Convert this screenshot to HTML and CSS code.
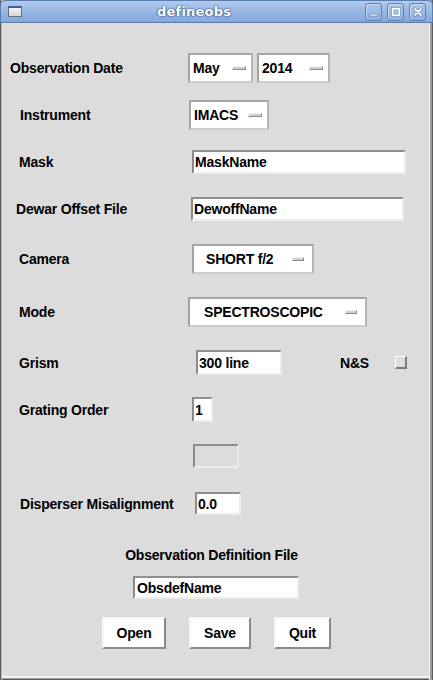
FILE: index.html
```html
<!DOCTYPE html>
<html>
<head>
<meta charset="utf-8">
<link rel="stylesheet" href="styles.css">
</head>
<body>
<div class="window">
  <div class="titlebar">
    <span class="win-icon"></span>
    <span class="title">defineobs</span>
    <div class="wm-buttons">
      <span class="wm-btn"><svg width="10" height="10" viewBox="0 0 10 10"><rect x="1" y="7" width="8" height="2" fill="#fff" stroke="#4a6a9a" stroke-width="0.6"/></svg></span>
      <span class="wm-btn"><svg width="10" height="10" viewBox="0 0 10 10"><rect x="1.5" y="1.5" width="7" height="7" fill="none" stroke="#fff" stroke-width="1.6"/><rect x="0.7" y="0.7" width="8.6" height="8.6" fill="none" stroke="#4a6a9a" stroke-width="0.4"/></svg></span>
      <span class="wm-btn"><svg width="10" height="10" viewBox="0 0 10 10"><path d="M2 2 L8 8 M8 2 L2 8" stroke="#4a6a9a" stroke-width="3" stroke-linecap="round"/><path d="M2 2 L8 8 M8 2 L2 8" stroke="#fff" stroke-width="1.8" stroke-linecap="round"/></svg></span>
    </div>
  </div>
  <div class="content">
    <div class="row r1">
      <span class="label l-date">Observation Date</span>
      <span class="menu m-month">May<i class="ind"></i></span>
      <span class="menu m-year">2014<i class="ind"></i></span>
    </div>
    <div class="row r2">
      <span class="label l-instr">Instrument</span>
      <span class="menu m-instr">IMACS<i class="ind"></i></span>
    </div>
    <div class="row r3">
      <span class="label l-mask">Mask</span>
      <span class="entry e-mask">MaskName</span>
    </div>
    <div class="row r4">
      <span class="label l-dewar">Dewar Offset File</span>
      <span class="entry e-dewar">DewoffName</span>
    </div>
    <div class="row r5">
      <span class="label l-camera">Camera</span>
      <span class="menu menu-wide m-camera">SHORT f/2<i class="ind"></i></span>
    </div>
    <div class="row r6">
      <span class="label l-mode">Mode</span>
      <span class="menu menu-wide m-mode">SPECTROSCOPIC<i class="ind"></i></span>
    </div>
    <div class="row r7">
      <span class="label l-grism">Grism</span>
      <span class="entry e-grism">300 line</span>
      <span class="label l-ns">N&amp;S</span>
      <span class="check"></span>
    </div>
    <div class="row r8">
      <span class="label l-order">Grating Order</span>
      <span class="entry e-order">1</span>
    </div>
    <div class="row r9">
      <span class="entry e-empty"></span>
    </div>
    <div class="row r10">
      <span class="label l-disp">Disperser Misalignment</span>
      <span class="entry e-disp">0.0</span>
    </div>
    <div class="row r11">
      <span class="label l-obsdef">Observation Definition File</span>
    </div>
    <div class="row r12">
      <span class="entry e-obsdef">ObsdefName</span>
    </div>
    <div class="row r13">
      <span class="button b-open">Open</span>
      <span class="button b-save">Save</span>
      <span class="button b-quit">Quit</span>
    </div>
  </div>
</div>
</body>
</html>
```

FILE: styles.css
```css
html, body {
  margin: 0;
  padding: 0;
  background: #dcdcdc;
}

.window {
  width: 433px;
  height: 680px;
  position: relative;
  background: #dcdcdc;
  font-family: "Liberation Sans", Arial, sans-serif;
  font-weight: bold;
  font-size: 14px;
  letter-spacing: -0.2px;
  color: #000;
  overflow: hidden;
  box-shadow: inset 1px 0 0 #5c5c5c, inset 2px 0 0 #bcbcbc,
              inset -1px 0 0 #5c5c5c, inset -3px 0 0 #9a9a9a, inset -4px 0 0 #f2f2f2,
              inset 0 -1px 0 #5c5c5c, inset 0 -2px 0 #9a9a9a, inset 0 -4px 0 #f2f2f2;
}

.titlebar {
  height: 23px;
  box-sizing: border-box;
  display: flex;
  align-items: center;
  background: linear-gradient(#b2cbed, #9ab9e5 45%, #84a7db);
  border: 1px solid #5b7cae;
  border-bottom-color: #5e7aa6;
  border-radius: 5px 5px 0 0;
  position: relative;
}

.win-icon {
  width: 14px;
  height: 11px;
  margin-left: 7px;
  box-sizing: border-box;
  border: 1px solid #5e6f86;
  border-top: 2px solid #3a5fa0;
  background: linear-gradient(#f2f2f2, #d6d6d6);
}

.title {
  margin-left: 135px;
  color: #fff;
  font-family: "DejaVu Sans", sans-serif;
  font-weight: bold;
  font-size: 13px;
  letter-spacing: 0.2px;
  text-shadow: 0 0 1px #2f4f82, 0 0 1px #2f4f82, 0 0 2px #3c5d90;
}

.wm-buttons {
  margin-left: auto;
  margin-right: 6px;
  display: flex;
  gap: 5px;
}

.wm-btn {
  width: 17px;
  height: 18px;
  box-sizing: border-box;
  border: 1px solid #5f7fb0;
  border-radius: 3px;
  background: linear-gradient(#adc7ec, #8fb0e0);
  box-shadow: inset 1px 1px 0 #c7daf4;
  display: flex;
  align-items: center;
  justify-content: center;
}

.wm-btn svg { display: block; }

.content {
  display: flex;
  flex-direction: column;
}

.row {
  display: flex;
  align-items: center;
  flex: none;
}

.label {
  white-space: nowrap;
  flex: none;
}

/* rows: vertical placement */
.r1  { margin-top: 30px; height: 30px; }
.r2  { margin-top: 17px; height: 30px; }
.r3  { margin-top: 20px; height: 24px; }
.r4  { margin-top: 23px; height: 24px; }
.r5  { margin-top: 23px; height: 30px; }
.r6  { margin-top: 23px; height: 30px; }
.r7  { margin-top: 23px; height: 25px; }
.r8  { margin-top: 22px; height: 25px; }
.r9  { margin-top: 22px; height: 24px; }
.r10 { margin-top: 24px; height: 23px; }
.r11 { margin-top: 31px; height: 18px; }
.r12 { margin-top: 12px; height: 23px; }
.r13 { margin-top: 18px; height: 32px; }

/* labels: horizontal placement */
.l-date   { margin-left: 10px; width: 178px; }
.l-instr  { margin-left: 20px; width: 169px; }
.l-mask   { margin-left: 19px; width: 173px; }
.l-dewar  { margin-left: 16px; width: 175px; }
.l-camera { margin-left: 19px; width: 173px; }
.l-mode   { margin-left: 19px; width: 169px; }
.l-grism  { margin-left: 19px; width: 177px; }
.l-ns     { margin-left: 58px; width: 55px; }
.l-order  { margin-left: 19px; width: 173px; }
.l-disp   { margin-left: 20px; width: 175px; }
.l-obsdef { margin-left: 118px; width: 187px; text-align: center; }

/* option menus */
.menu {
  display: flex;
  align-items: center;
  justify-content: space-between;
  box-sizing: border-box;
  height: 30px;
  background: #fff;
  border: 2px solid;
  border-color: #a6a6a6 #b4b4b4 #cdcdcd #a2a2a2;
  padding: 0 5px 0 3px;
  flex: none;
}

.menu-wide { padding: 0 8px 0 12px; }
.m-mode { padding-left: 14px; }

.ind {
  display: block;
  width: 14px;
  height: 4px;
  box-sizing: border-box;
  background: #cfcfcf;
  border: 1px solid;
  border-color: #f4f4f4 #8a8a8a #8a8a8a #f4f4f4;
}

.menu-wide .ind { width: 12px; }

.m-month  { width: 65px; }
.m-year   { width: 73px; margin-left: 4px; }
.m-instr  { width: 80px; }
.m-camera { width: 122px; }
.m-mode   { width: 179px; }

/* entries */
.entry {
  display: flex;
  align-items: center;
  box-sizing: border-box;
  background: #fff;
  border: 2px solid;
  border-color: #8f8f8f #ececec #ececec #8a8a8a;
  padding-left: 1px;
  white-space: nowrap;
  flex: none;
}

.e-mask   { width: 214px; height: 24px; }
.e-dewar  { width: 213px; height: 24px; }
.e-grism  { width: 86px; height: 25px; }
.e-order  { width: 21px; height: 25px; }
.e-empty  { width: 46px; height: 24px; margin-left: 193px; background: #dcdcdc; }
.e-disp   { width: 46px; height: 23px; }
.e-obsdef { width: 166px; height: 23px; margin-left: 133px; padding-left: 2px; }

/* checkbox */
.check {
  width: 12px;
  height: 13px;
  box-sizing: border-box;
  background: #dcdcdc;
  border: 2px solid;
  border-color: #ffffff #7c7c7c #7c7c7c #ffffff;
  border-top-width: 1px;
  border-left-width: 1px;
  flex: none;
}

/* buttons */
.r13 { gap: 23px; }

.button {
  display: flex;
  align-items: center;
  justify-content: center;
  box-sizing: border-box;
  height: 32px;
  background: #fff;
  border: 2px solid;
  border-color: #f6f6f6 #8a8a8a #8a8a8a #f6f6f6;
  flex: none;
}

.b-open { width: 64px; margin-left: 102px; }
.b-save { width: 62px; }
.b-quit { width: 57px; }
```
